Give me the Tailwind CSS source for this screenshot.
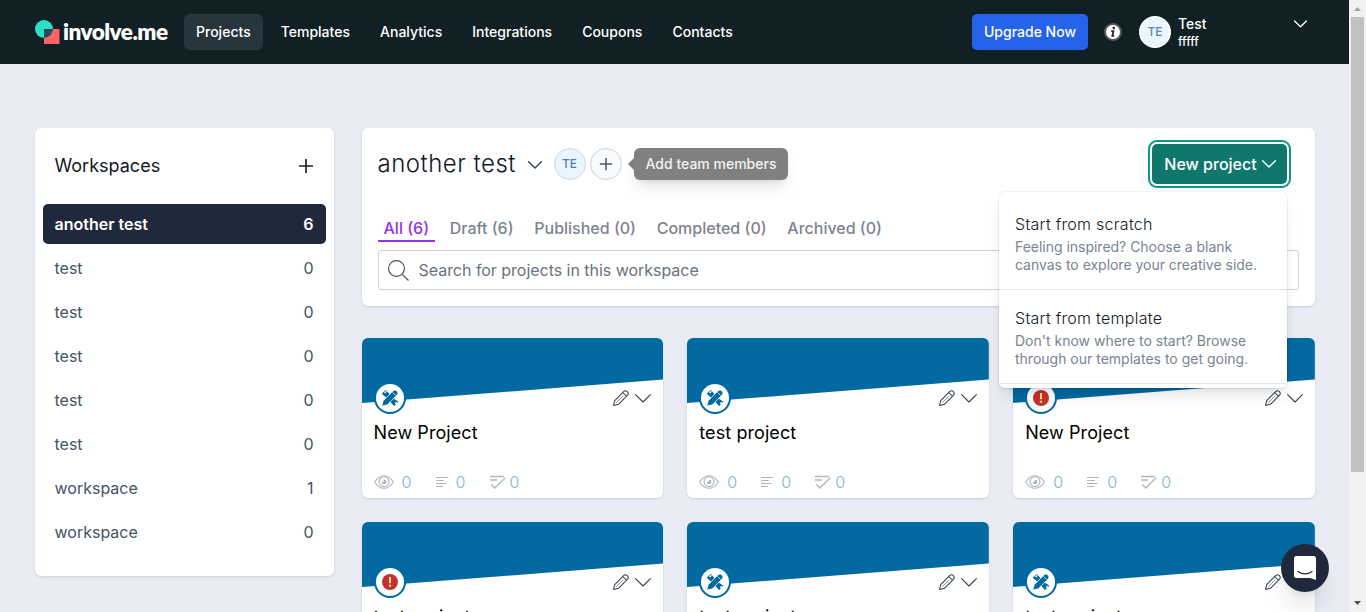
<!DOCTYPE html>
<html lang="en">
<head>
<meta charset="utf-8">
<title>involve.me</title>
<script src="https://cdn.jsdelivr.net/npm/@tailwindcss/browser@4"></script>
</head>
<body class="h-[612px] overflow-hidden bg-[#e9ecf5] font-['Inter',sans-serif] text-[#111827]">
<svg class="hidden">
  <symbol id="plus" viewBox="0 0 16 16"><path d="M8 1v14M1 8h14" fill="none" stroke="currentColor" stroke-width="1.7"/></symbol>
  <symbol id="down" viewBox="0 0 14 8"><path d="M.6.8 7 7 13.400.8" fill="none" stroke="currentColor" stroke-width="1.4" stroke-linecap="round" stroke-linejoin="round"/></symbol>
  <symbol id="chev" viewBox="0 0 16 9"><path d="M.6.6 8 8 15.400.6" fill="none" stroke="currentColor" stroke-width="1.1" stroke-linecap="round" stroke-linejoin="round"/></symbol>
  <symbol id="pencil" viewBox="0 0 16 16"><path d="M.6 15.400 1.700 10.600 10.600 1.600Q12.500-.1 14.400 1.600 16.100 3.500 14.400 5.400L5.400 14.300ZM9.700 2.500l3.800 3.800" fill="none" stroke="currentColor" stroke-width="1.050" stroke-linejoin="round"/><path d="m3.300 12.700 7-7" stroke="currentColor" stroke-width=".6"/></symbol>
  <symbol id="eye" viewBox="0 0 20 14"><g fill="none" stroke="currentColor" stroke-width="1.1"><path d="M.6 7Q4.500.7 10 .7T19.400 7Q15.500 13.300 10 13.300T.6 7Z"/><circle cx="10" cy="6.700" r="4.900"/></g><path d="M10 4.700a2.300 2.300 0 1 1-2.200 2.500q1.700.1 2.200-2.500Z" fill="currentColor"/></symbol>
  <symbol id="lines" viewBox="0 0 12 12"><path d="M0 1.500h12M0 4.500h8M0 7.500h10.500M0 10.500h7" stroke="currentColor" stroke-width="1.100"/></symbol>
  <symbol id="check" viewBox="0 0 16 14"><path d="M0 1.500h14M0 5h7M1.300 9.500 4.800 13 15.300 2.700" fill="none" stroke="currentColor" stroke-width="1.300"/></symbol>
  <symbol id="tools" viewBox="0 0 18 18"><path d="M4.200 1.300 1.200 4.300Q.9 5 1.500 5.600L5.500 8.800 8.700 5.500 5.500 1.500Q4.800.9 4.200 1.300ZM12.300 9.300 9 12.500l3.500 4q.6.500 1.300 0l3-3q.5-.7 0-1.300Z" fill="currentColor"/><path d="m3.600 3.900 1.700-1.700M14.200 15l1.800-1.800" stroke="#fff" stroke-width="1.500"/><path d="M.9 17.100 2.200 11.700 11.900 2q2.100-2 4.100 0t0 4.100L6.300 15.800Z" fill="currentColor" stroke="#fff" stroke-width=".7"/><path d="m11.500 3.300 3.200 3.200" stroke="#fff" stroke-width=".7"/></symbol>
</svg>

<header class="flex h-16 w-[1349px] items-center bg-[#112025] pl-[35px] text-sm font-medium text-white">
  <svg class="h-[26px] w-[25px] shrink-0" viewBox="0 0 25 26"><path d="M9 10h15.500v15H9z" fill="#ff6464"/><circle cx="9" cy="10" r="9" fill="#2be0c8"/><path d="M9 10h9A9 9 0 0 1 9 19Z" fill="#2a4a5c"/></svg>
  <span class="mt-px ml-[3px] w-[105px] font-['Lato',sans-serif] text-[22.5px] font-extrabold leading-none tracking-[-0.52px] whitespace-nowrap">involve.me</span>
  <nav class="ml-4 flex gap-1.5 tracking-[0.01px]">
    <a class="flex h-9 items-center rounded-md bg-[#27363c] px-3">Projects</a>
    <a class="flex h-9 items-center px-3">Templates</a>
    <a class="flex h-9 items-center px-3">Analytics</a>
    <a class="flex h-9 items-center px-3">Integrations</a>
    <a class="flex h-9 items-center px-3">Coupons</a>
    <a class="flex h-9 items-center px-3">Contacts</a>
  </nav>
  <a class="ml-auto flex h-9 w-[116px] items-center justify-center rounded-[5px] bg-[#2563eb]">Upgrade Now</a>
  <svg class="ml-4 size-[18px]" viewBox="0 0 18 18"><circle cx="9" cy="9" r="8" fill="#fff" stroke="#515c60" stroke-width="2"/><circle cx="9.800" cy="5" r="1.300" fill="#222"/><path d="M7 8h2.500L8.300 13h2" fill="none" stroke="#222" stroke-width="1.700"/></svg>
  <span class="ml-[17px] flex size-8 items-center justify-center rounded-full border-2 border-white bg-[#e9f6ff] text-xs text-[#6683a8]">TE</span>
  <span class="ml-[7px] w-[116px]"><span class="block h-[18px] leading-[17px]">Test</span><span class="block text-xs leading-[17px]">fffff</span></span>
  <svg class="mr-[42px] mb-4 h-2 w-[13px]"><use href="#down"/></svg>
</header>

<div class="flex items-start gap-7 pt-16 pl-[34.5px]">
  <aside class="h-[448px] w-[299px] shrink-0 rounded-md bg-white px-2 pt-[18px] shadow-sm">
    <div class="flex h-10 items-center justify-between px-3 text-lg"><span>Workspaces</span><svg class="size-4 text-[#222]"><use href="#plus"/></svg></div>
    <ul id="workspaces" class="mt-[18px] flex flex-col gap-1 text-base text-[#475264]"></ul>
  </aside>

  <main class="w-[953.5px] shrink-0">
    <section class="h-[178px] rounded-md bg-white px-4 pt-4 shadow-sm">
      <div class="relative flex h-10 items-center">
        <h1 class="w-[150px] text-2xl font-light tracking-[0.5px] whitespace-nowrap">another test</h1>
        <svg class="mt-0.5 h-2 w-3.5 text-[#374151]"><use href="#down"/></svg>
        <span class="ml-3 flex size-8 items-center justify-center rounded-full border border-[#cfd6e2] bg-[#e9f6ff] text-xs font-medium text-[#587ea6]">TE</span>
        <span class="ml-1 flex size-8 items-center justify-center rounded-full border border-[#d0d3da] bg-[#f9fafb] text-[#4b5563]"><svg class="size-3.5"><use href="#plus"/></svg></span>
        <span class="ml-[6px] h-0 w-0 border-y-[6px] border-r-[6px] border-y-transparent border-r-[#808080]"></span>
        <span class="flex h-8 w-[154px] items-center justify-center rounded-md bg-[#808080] pl-px text-sm font-medium text-[#f3f3f3] shadow-lg">Add team members</span>
        <button class="absolute top-0 right-3 flex h-10 w-[135px] items-center justify-center gap-[5px] rounded-[5px] bg-[#10776c] pl-px text-base font-medium whitespace-nowrap text-white ring-2 ring-[#0d9488] ring-offset-2">New project<svg class="h-2 w-3.5"><use href="#down"/></svg></button>
        <div class="absolute top-12 right-3 z-10 h-[196px] w-[288px] overflow-hidden rounded-md bg-white text-sm leading-[18px] text-[#7a8392] shadow-lg ring-1 ring-black/5">
          <div class="h-[98px] border-b border-[#e5e7eb] px-4 pt-[22px]"><p class="mb-1 text-base leading-5 font-light tracking-[0.28px] text-[#111827]">Start from scratch</p><p class="tracking-[-0.02px] whitespace-nowrap">Feeling inspired? Choose a blank<br>canvas to explore your creative side.</p></div>
          <div class="h-[94px] border-b border-[#e5e7eb] px-4 pt-[18px]"><p class="mb-1 text-base leading-5 font-light tracking-[0.28px] text-[#111827]">Start from template</p><p class="whitespace-nowrap">Don't know where to start? Browse<br>through our templates to get going.</p></div>
        </div>
      </div>
      <div class="mt-8 flex h-[26px] gap-[8.7px] text-base leading-[25px] font-medium whitespace-nowrap text-[#7c8391]">
        <a class="border-b-2 border-[#9333ea] px-1.5 text-[#9333ea]">All (6)</a><a class="px-1.5">Draft (6)</a><a class="px-1.5">Published (0)</a><a class="px-1.5">Completed (0)</a><a class="px-1.5">Archived (0)</a>
      </div>
      <div class="mt-2 flex h-10 items-center gap-2.5 rounded-[3px] border border-[#cfd2da] pl-[9px] text-base tracking-[-0.03px] text-[#6b7280]">
        <svg class="size-[21px]" viewBox="0 0 21 21" fill="none" stroke="#4b5563" stroke-width="1.200"><circle cx="8.500" cy="8.500" r="7.900"/><path d="m14.300 14.300 6.200 6.200"/></svg>Search for projects in this workspace
      </div>
    </section>
    <section id="projects" class="mt-8 grid grid-cols-3 gap-6"></section>
  </main>
</div>

<div class="fixed top-[544px] left-[1281px] flex size-12 items-center justify-center rounded-full bg-[#1f293b] shadow-xl">
  <svg class="h-6 w-[22px]" viewBox="0 0 22 24"><path d="M2.500 0h17Q22 0 22 2.500V24l-6-2H2.500Q0 22 0 19.500v-17Q0 0 2.500 0Z" fill="#fff"/><path d="M4 15.500q7 4.800 14 0" fill="none" stroke="#1f293b" stroke-width="1.300" stroke-linecap="round"/></svg>
</div>
<div class="fixed inset-y-0 right-0 flex w-[17px] flex-col items-center bg-[#f1f1f1]">
  <svg class="mt-[7px] h-1 w-[7px]" viewBox="0 0 7 4"><path d="M0 4 3.500 0 7 4Z" fill="#a3a3a3"/></svg>
  <span class="mt-1.5 h-[455px] w-[13px] bg-[#c1c1c1]"></span>
  <svg class="mt-auto mb-[7px] h-1 w-[7px]" viewBox="0 0 7 4"><path d="M0 0 3.500 4 7 0Z" fill="#505050"/></svg>
</div>

<script>
  const workspaces = [['another test', 6], ['test', 0], ['test', 0], ['test', 0], ['test', 0], ['test', 0], ['workspace', 1], ['workspace', 0]];
  document.getElementById('workspaces').innerHTML = workspaces.map(([name, n], i) => {
    const row = i === 0
      ? 'flex h-10 items-center justify-between rounded-[5px] bg-[#1f293b] px-3 font-semibold text-white'
      : 'flex h-10 items-center justify-between px-3';
    return `<li class="${row}"><span>${name}</span><span>${n}</span></li>`;
  }).join('');

  const tools = '<svg class="size-[18px] text-[#0369a1]"><use href="#tools"/></svg>';
  const alert = '<svg class="size-4" viewBox="0 0 16 16"><circle cx="8" cy="8" r="8" fill="#c53030"/><path d="M8 3v6.200" stroke="#fbe27a" stroke-width="2"/><circle cx="8" cy="11.800" r="1.200" fill="#fbe27a"/></svg>';
  const projects = [['New Project', tools], ['test project', tools], ['New Project', alert], ['test project', alert], ['test project', tools], ['test project', tools]];
  document.getElementById('projects').innerHTML = projects.map(([name, badge]) => `
    <article class="h-40 overflow-hidden rounded-md bg-white shadow-sm">
      <div class="relative h-[82px]">
        <svg class="block h-[65px] w-full" viewBox="0 0 302 65" preserveAspectRatio="none"><path d="M0 0h302v41.500L0 65Z" fill="#0369a1"/></svg>
        <span class="absolute top-11 left-3 flex size-8 items-center justify-center rounded-full border-2 border-[#0369a1] bg-white">${badge}</span>
        <span class="absolute top-[52px] right-3 flex items-center gap-1.5 text-[#374151]"><svg class="size-4"><use href="#pencil"/></svg><svg class="h-[9px] w-4"><use href="#chev"/></svg></span>
      </div>
      <h2 class="px-3 text-lg leading-[26px] tracking-[0.08px] text-black">${name}</h2>
      <div class="mt-6 flex h-6 items-center px-3 font-light text-[#7db4d3]">
        <svg class="h-3.5 w-5 text-[#b1b5bf]"><use href="#eye"/></svg><span class="ml-2 w-[34px]">0</span>
        <svg class="h-3 w-3 text-[#b1b5bf]"><use href="#lines"/></svg><span class="ml-2 w-[34px]">0</span>
        <svg class="h-3.5 w-4 text-[#b1b5bf]"><use href="#check"/></svg><span class="ml-1">0</span>
      </div>
    </article>`).join('');
</script>
</body>
</html>
